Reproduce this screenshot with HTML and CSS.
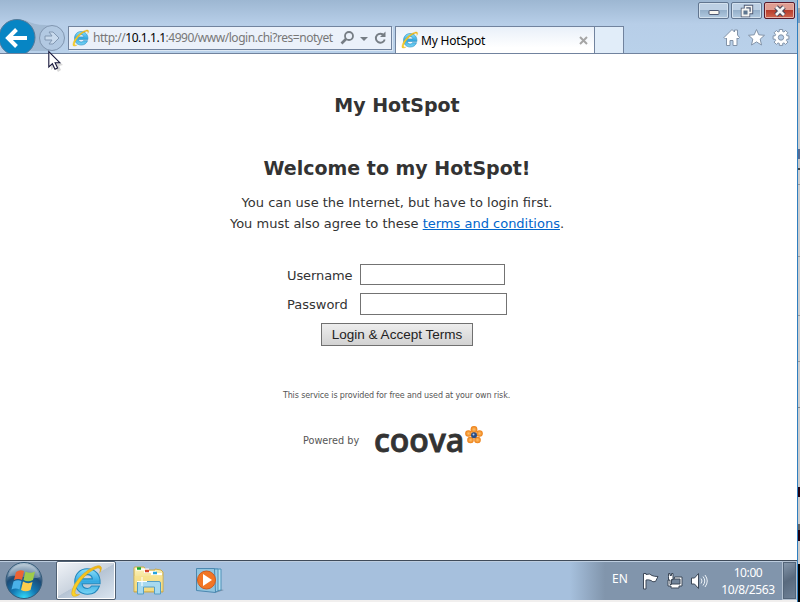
FILE: index.html
```html
<!DOCTYPE html>
<html lang="en">
<head>
<meta charset="utf-8">
<title>My HotSpot</title>
<link rel="stylesheet" href="styles.css">
</head>
<body>
<svg width="0" height="0" class="defs">
  <defs>
    <linearGradient id="ieBlue" x1="0" y1="0" x2="0" y2="1"><stop offset="0" stop-color="#8be0fb"/><stop offset=".5" stop-color="#35a9e1"/><stop offset="1" stop-color="#79d5f5"/></linearGradient>
    <linearGradient id="ieGold" x1="0" y1="1" x2="1" y2="0"><stop offset="0" stop-color="#fbd52c"/><stop offset="1" stop-color="#f2b410"/></linearGradient>
    <radialGradient id="orb" cx=".5" cy="1" r="1"><stop offset="0" stop-color="#35dffc"/><stop offset=".35" stop-color="#1379b4"/><stop offset=".65" stop-color="#1c4a75"/><stop offset="1" stop-color="#b9cbd8"/></radialGradient>
    <linearGradient id="folder" x1="0" y1="0" x2="0" y2="1"><stop offset="0" stop-color="#fdf4bd"/><stop offset="1" stop-color="#e9cb63"/></linearGradient>
    <radialGradient id="petal"><stop offset="0" stop-color="#ffc06a"/><stop offset="1" stop-color="#ec7d12"/></radialGradient>
    <symbol id="ie" viewBox="0 0 32 32">
      <path d="M16 4.500C9.500 4.500 4.500 9.500 4.500 16.500S9.500 28.500 16.500 28.500C22 28.500 26 25.500 27.700 20.700H20.300C19.400 22.200 18.200 23 16.300 23 13.400 23 11.600 21.200 11.400 18.500H28.300C29 10.300 23.800 4.500 16 4.500ZM11.600 14C12.100 11.500 13.800 10 16.400 10S20.800 11.500 21.100 14Z" fill="url(#ieBlue)" stroke="#2288bd" stroke-width="1"/>
      <path d="M28 8C31 3.500 29.500 .8 25 2 15 4.500 3 17 1.700 26.500 1 31 4.300 31.500 9 28.600 5.300 29.500 4 28 5 25 7.500 17 17 7 24.500 4.300 28 3 29.200 4.600 28 8Z" fill="url(#ieGold)" stroke="#d9a514" stroke-width=".5"/>
    </symbol>
  </defs>
</svg>
<div class="screen">
  <div class="desktop">
    <header class="chrome">
      <div class="nav">
        <svg class="nav-buttons" width="68" height="53" viewBox="0 0 68 53">
          <path d="M25 20Q34 25 45 25L55 27V51H25Z" fill="#a2bad3"/>
          <circle cx="17" cy="37.500" r="18" fill="#0785c4" stroke="#557a99"/>
          <path d="M27 38H9M16.500 29.500L8 38L16.500 46.500" fill="none" stroke="#fff" stroke-width="4"/>
          <circle cx="52" cy="38" r="12.500" fill="#b2c9e2" stroke="#8196b0"/>
          <path d="M45 36h7l-3-4h4l6 6-6 6h-4l3-4h-7z" fill="#c8daed" stroke="#8298b2"/>
        </svg>
        <div class="address">
          <svg width="18" height="18"><use href="#ie"/></svg>
          <span class="url"><span class="url-text">http://<b>10.1.1.1</b>:4990/www/login.chi?res=notyet</span></span>
          <svg class="tools" width="52" height="22" viewBox="0 0 52 22" fill="none" stroke="#767d84">
            <circle cx="11" cy="9" r="4" stroke-width="1.800"/><path d="M8 12L3.500 16.500" stroke-width="2.600"/>
            <path d="M22 10h8l-4 4z" fill="#767d84" stroke="none"/>
            <path d="M46 8.500A4.500 4.500 0 1 0 46.700 12.500" stroke-width="1.900"/><path d="M47.500 4.500v5.500h-5.500z" fill="#767d84" stroke="none"/>
          </svg>
        </div>
        <div class="tab">
          <svg width="18" height="18"><use href="#ie"/></svg>
          <span class="tab-title">My HotSpot</span>
          <svg class="tab-close" width="9" height="9"><path d="M1 1l7 7M8 1L1 8" stroke="#a5a5a5" stroke-width="2"/></svg>
        </div>
        <div class="newtab"></div>
      </div>
      <div class="controls">
        <div class="captions">
          <div class="cap"><svg width="12" height="12"><rect x="1" y="5.500" width="10" height="4" rx="1" fill="#f8f5ef" stroke="#4c5873"/></svg></div>
          <div class="cap"><svg width="14" height="14" fill="none"><path d="M5.500 2.500h6v6h-6zM2.500 5.500h6v6h-6z" stroke="#4c5873" stroke-width="3.400"/><path d="M5.500 2.500h6v6h-6z" stroke="#f4f4f2" stroke-width="1.500"/><path d="M2.500 5.500h6v6h-6z" fill="#5d7690" stroke="#f4f4f2" stroke-width="1.900"/></svg></div>
          <div class="cap close"><svg width="14" height="12"><path d="M3 2l8 8M11 2L3 10" stroke="#4c4657" stroke-width="5"/><path d="M3 2l8 8M11 2L3 10" stroke="#f4f4f4" stroke-width="2.700"/></svg></div>
        </div>
        <svg class="commands" width="68" height="20" viewBox="0 0 68 20" fill="#fff" stroke="#8293a8">
          <path d="M1 9.500L9 1.500l2.500 2.500V2h3v5L16.500 9.500l-1.500 1.500-1-1v7.500H10v-5H7v5H3.500V10l-1 1z"/>
          <path d="M33.500 1.500l2.300 5.300 5.700.5-4.300 3.800 1.300 5.900-5-3.100-5 3.100 1.300-5.900-4.300-3.800 5.700-.5z"/>
          <path d="M56.300 1.500h3.400v2l1.300.5 1.600-1.500 2.300 2.300-1.500 1.700.5 1.300h2v3.400h-2l-.5 1.300 1.500 1.600-2.300 2.300-1.600-1.500-1.300.5v2h-3.400v-2l-1.300-.5-1.600 1.500-2.300-2.300 1.500-1.600-.5-1.300h-2V7.800h2l.5-1.300-1.500-1.700 2.300-2.300L55 4l1.300-.5z"/><circle cx="58" cy="9.500" r="2.700" fill="#b5cce6"/>
        </svg>
      </div>
    </header>

    <main class="page">
      <h1>My HotSpot</h1>
      <h2>Welcome to my HotSpot!</h2>
      <p class="intro">You can use the Internet, but have to login first.<br>You must also agree to these <a href="#">terms and conditions</a>.</p>
      <form class="login">
        <label for="user" class="user-label">Username</label><input id="user" class="user" type="text">
        <label for="pass">Password</label><input id="pass" class="pass" type="password">
        <button type="button">Login &amp; Accept Terms</button>
      </form>
      <p class="note">This service is provided for free and used at your own risk.</p>
      <div class="powered">
        <span class="by">Powered by</span>
        <span class="coova">coova</span>
        <svg class="flower" width="18" height="18" viewBox="0 0 18 18">
          <g fill="url(#petal)"><circle cx="9" cy="3.500" r="3.400"/><circle cx="14.500" cy="7.500" r="3.300"/><circle cx="12.500" cy="14" r="3.300"/><circle cx="5.500" cy="14" r="3.300"/><circle cx="3.500" cy="7.500" r="3.300"/></g>
          <circle cx="9" cy="9.300" r="3" fill="#294d83"/><circle cx="8.500" cy="8.500" r="1" fill="#b9cce8"/>
        </svg>
      </div>
    </main>

    <footer class="taskbar">
      <div class="start">
        <svg width="40" height="39" viewBox="0 0 40 39">
          <circle cx="20" cy="19.500" r="18" fill="url(#orb)" stroke="#345a78"/>
          <path d="M4 16C7-1 33-1 36 16 27 20 13 12 4 16Z" fill="#fff" opacity=".28"/>
          <path d="M12 11q4-3 8-1l-2 9q-4-2-8 0z" fill="#ed6334"/><path d="M21.500 10.500q5 2.500 9.500 0l-2 8.500q-5 2.500-9.500 0z" fill="#9ecb4a"/>
          <path d="M9.500 20.500q4-2 8-.5l-2 8.500q-4-2-8 0z" fill="#4ab1e8"/><path d="M19 20.500q5 3 9.500 .500l-2 8q-5 2.500-9.500 0z" fill="#fbcc4c"/>
        </svg>
      </div>
      <div class="task-active"><svg width="34" height="34"><use href="#ie"/></svg></div>
      <svg class="explorer" width="34" height="32" viewBox="0 0 34 32">
        <path d="M2 6V3q0-1 1-1h9l2 3h9V4l6 1 2 2v20H2z" fill="url(#folder)" stroke="#c9a94c"/>
        <path d="M4 3.500h13v2H4zM12 6h12v2H12zM19 8h11v2H19z" fill="#fff"/>
        <path d="M5 3.500h4" stroke="#17a82b" stroke-width="2.500"/><path d="M13 6h4" stroke="#d5442a" stroke-width="2.500"/><path d="M21 8h4" stroke="#25a4de" stroke-width="2.500"/>
        <path d="M2.500 11H30.500V26H2.500Z" fill="#f6e18d" opacity=".7"/>
        <path d="M5.500 29V18q0-1.500 1.500-1.500h20q1.500 0 1.500 1.500v11h-6v-7h-11v7z" fill="#a7d9ef" stroke="#559ec5"/>
        <path d="M10 12v9M5 16.500h10" stroke="#fff"/>
      </svg>
      <svg class="player" width="32" height="28" viewBox="0 0 32 28">
        <path d="M20 26l9-3-6-1z" fill="#718ba5"/>
        <path d="M7 2h19v21l-5 1z" fill="#b9e1f2" stroke="#4f91b8"/><path d="M5 2h18v22l-3 1z" fill="#9bd0e9" stroke="#4f91b8"/>
        <path d="M1.500 1.500h18l1 24-19-2z" fill="#91c5df" stroke="#4b88b0"/>
        <circle cx="11.500" cy="13" r="9" fill="#f27625" stroke="#cf5b1c"/><path d="M8 7l9 6-9 6z" fill="#fff"/>
      </svg>
      <div class="tray">
        <span class="lang">EN</span>
        <svg class="tray-icons" width="66" height="18" viewBox="0 0 66 18" fill="#fff" stroke="#3c4858">
          <path d="M.5 1.500h2.500v1q4-1.500 6 1 2 1 6 1l-2.500 5q-3 1-4.500-1-2-1-5-.5v9H.5z"/>
          <path d="M31.500 5h7.500v9h-3v2h-8v-2h-3V8h6z"/><path d="M30.500 7h6.500v5H28V9z" fill="#71849a"/><path d="M25.500 4.500v-3h1.500v2h1.500v-2h1.500v6h-1.500v5h-1.500V8h-1.500z"/>
          <path d="M48.500 6h3l4-4.500v15L51.500 12h-3z"/><path d="M58 6.500q2 2.500 0 5M60 4.500q3.500 4.500 0 9M62 3q4.500 6 0 12" fill="none" stroke="#eef3f8"/>
        </svg>
        <div class="clock"><span>10:00</span><span>10/8/2563</span></div>
        <div class="show-desktop"></div>
      </div>
    </footer>
    <div class="bottom-strip"></div>
  </div>
  <div class="backdrop"></div>
  <svg class="cursor" width="16" height="22" viewBox="0 0 16 22">
    <path d="M3 4v16l4-3 3 5 3-2-2-4 4-1z" fill="#000" opacity=".15"/>
    <path d="M.8 1.500V17l3.600-3.300L7 19.200l2.600-1.200-2.500-5.300h4.700z" fill="#fff" stroke="#16163a" stroke-width="1.100"/>
  </svg>
</div>
</body>
</html>
```
FILE: styles.css
```css
* { box-sizing: border-box; }
body { margin: 0; overflow: hidden; background: #fff; font-family: "DejaVu Sans", sans-serif; }
.defs { position: absolute; }
svg { display: block; flex: none; }
.screen { position: relative; display: flex; width: 800px; height: 602px; }
.desktop { width: 797px; height: 602px; display: flex; flex-direction: column; }
.cursor { position: absolute; left: 48px; top: 50px; }
.backdrop {
  width: 3px; border-left: 1px solid #2f7fc0;
  background: linear-gradient(#d0d0d0 0 8px, #a4a4a4 8px 13px, #7c9dbf 13px 23px, #cecece 23px 149px, #566c94 149px 159px, #c7c7c7 159px 168px, #444 168px 170px, #cecece 170px 184px, #999 184px 185px, #cecece 185px 256px, #999 256px 257px, #cecece 257px 315px, #999 315px 316px, #cecece 316px 361px, #999 361px 362px, #cecece 362px 407px, #888 407px 408px, #cdcdcd 408px 487px, #200010 487px 497px, #cdcdcd 497px 524px, #666 524px 530px, #200010 530px 541px, #cdcdcd 541px 564px, #000 564px);
}

.chrome { height: 54px; display: flex; justify-content: space-between; border-bottom: 1px solid #71839e; background: linear-gradient(#9db7d2, #b7cee8 24px, #b9d1ea); overflow: hidden; }
.nav { display: flex; align-items: flex-end; font-family: "Noto Sans", sans-serif; font-size: 12px; }
.address { width: 324px; height: 24px; margin-bottom: 3px; padding-left: 3px; display: flex; align-items: center; border: 1px solid #71839e; background: #ebf1fa; box-shadow: 1px 1px #dce8f5; }
.url { width: 243px; margin-left: 3px; overflow: hidden; white-space: nowrap; color: #777; line-height: 22px; }
.url-text { letter-spacing: -0.47px; }
.url b { font-weight: 400; color: #000; }
.tools { margin-left: 2px; }
.tab { width: 200px; height: 27px; margin-left: 3px; padding: 0 6px 0 5px; display: flex; align-items: center; border: 1px solid #71839e; border-bottom: 0; background: linear-gradient(#e9f0f9, #fff 80%); color: #000; }
.tab-title { margin-left: 2px; padding-top: 2px; letter-spacing: -0.2px; line-height: 20px; }
.tab-close { margin-left: auto; }
.newtab { width: 29px; height: 27px; border: 1px solid #71839e; border-width: 1px 1px 0 0; background: #e1edf9; }
.controls { display: flex; flex-direction: column; align-items: flex-end; padding: 2px 2px 0 0; }
.captions { display: flex; gap: 2px; }
.cap { width: 31px; height: 17px; display: flex; align-items: center; justify-content: center; border: 1px solid #61758f; border-radius: 2px; background: linear-gradient(#bdd0e4 45%, #95b0ca 50%, #b1cae0); box-shadow: inset 0 0 0 1px #d3e1ee; }
.close { border-color: #58192a; background: linear-gradient(#df9d91 45%, #b83d2c 50%, #d0654e); box-shadow: inset 0 0 0 1px #e8b5ab; }
.commands { margin: 9px 4px 0 0; }

.page { height: 506px; background: #fff; color: #333; text-align: center; }
h1, h2, p { margin: 0; padding-right: 3px; }
h1, h2 { font-size: 19px; line-height: 24px; white-space: nowrap; }
h1, h2 { padding-top: 39px; }
.intro { padding-top: 12px; font-size: 13px; line-height: 21px; white-space: nowrap; }
a { color: #0066cc; }
.login { width: 220px; margin: 30px 0 0 287px; display: grid; grid-template-columns: 73px 147px; grid-template-rows: 21px 22px 23px; row-gap: 8px; align-items: center; text-align: left; font-size: 13px; }
.user-label { padding-top: 2px; letter-spacing: -0.1px; }
input { height: 21px; border: 1px solid #737373; padding: 0; background: #fff; }
.user { width: 145px; }
.pass { width: 147px; height: 22px; }
.login button { grid-column: 1 / 3; width: 152px; height: 23px; margin-left: 34px; padding: 0; border: 1px solid #707070; background: linear-gradient(#ededed, #d2d2d2); color: #222; font: 13.5px "Liberation Sans", sans-serif; white-space: nowrap; }
.note { margin-top: 43px; padding-right: 4px; font-size: 8px; line-height: 14px; letter-spacing: -0.13px; color: #555; }
.powered { height: 40px; margin: 17px 0 0 303px; display: flex; align-items: center; }
.by { width: 71px; font-size: 9.7px; color: #555; text-align: left; white-space: nowrap; }
.coova { width: 91px; font: 600 32px/40px "Open Sans", sans-serif; letter-spacing: -0.1px; -webkit-text-stroke: 0.8px #333; text-align: left; }
.flower { margin-top: -11px; }

.taskbar { height: 40px; display: flex; align-items: center; border-top: 1px solid #3f4b5a; box-shadow: inset 0 1px #bdcddf; background: linear-gradient(90deg, #8194ab 0 56px, #a6c0dd 116px 570px, #8195ac 605px); }
.start { width: 56px; padding-left: 4px; }
.task-active { width: 60px; height: 39px; padding-left: 13px; display: flex; align-items: center; border: 1px solid #4f6073; border-radius: 2px; box-shadow: inset 0 0 0 1px #fff; background: linear-gradient(150deg, #f1f4f8, #cbd4df 49%, #b6c4d4 50%, #dbe6f1); }
.explorer { margin-left: 16px; }
.player { margin-left: 29px; }
.tray { margin-left: auto; height: 39px; display: flex; align-items: center; color: #fff; font: 12px "Noto Sans", sans-serif; }
.lang { width: 31px; padding-bottom: 5px; }
.tray-icons { margin-right: 7px; }
.clock { width: 64px; display: flex; flex-direction: column; align-items: center; line-height: 17px; letter-spacing: -0.4px; }
.show-desktop { width: 15px; height: 39px; margin-left: 2px; border: 1px solid #b4c2d2; outline: 1px solid #536579; outline-offset: -2px; background: linear-gradient(150deg, #8799ad, #596a7e 48%, #6e8197); }
.bottom-strip { height: 2px; background: #f1efee; }
```
